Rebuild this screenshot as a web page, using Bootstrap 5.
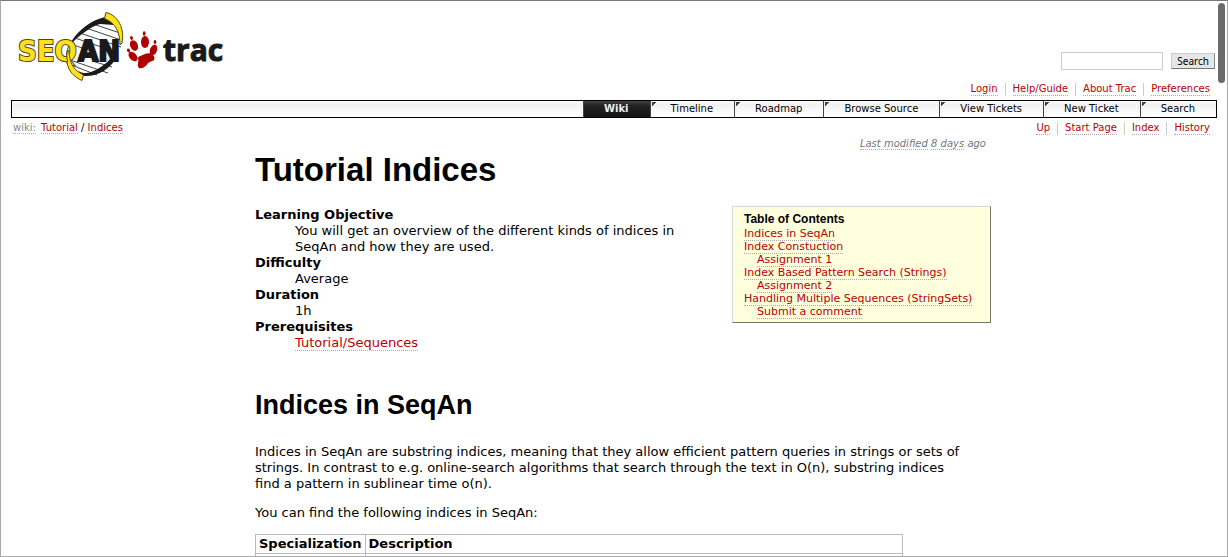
<!DOCTYPE html>
<html lang="en">
<head>
<meta charset="utf-8">
<meta name="viewport" content="width=device-width, initial-scale=1">
<title>Tutorial Indices – SeqAn Trac</title>
<link href="https://cdn.jsdelivr.net/npm/bootstrap@5.3.0/dist/css/bootstrap.min.css" rel="stylesheet">
<style>
  body {
    font: 13px/16px "DejaVu Sans", Verdana, sans-serif;
    color: #000;
    background: #fff;
  }
  .viewport-frame {
    border: 1px solid #aaa;
    border-top-color: #777;
    padding: 0 10px;
  }
  .scroll-thumb {
    top: 2px;
    right: 2px;
    width: 7px;
    height: 80px;
    background: #6b6b6b;
  }
  a {
    color: #b00;
    text-decoration: none;
    border-bottom: 1px dotted #aaa;
  }
  a:hover { color: #555; background: #eee; }
  .site-head { height: 82px; }
  .site-head .logo-link { border: 0; margin: 10px 0 0 6px; }
  .site-head .logo-link:hover { background: none; }
  .search-form { gap: 8px; margin: 0 2px 13px 0; }
  .search-form input {
    width: 102px;
    height: 18px;
    border: 1px solid #ccc;
  }
  .search-form button {
    font: 10px/13px "Noto Sans", sans-serif;
    height: 16px;
    padding: 0 5px;
    color: #000;
    background: #e6e6e6;
    border: 1px solid;
    border-color: #ccc #888 #777 #ccc;
  }
  .link-row { font-size: 10px; line-height: 12px; padding-right: 7px; }
  .link-row li + li { border-left: 1px solid #ccc; margin-left: 7px; padding-left: 7px; }
  .link-row a { display: block; line-height: 12px; }
  .main-tabs {
    border: 1px solid #000;
    font-size: 10px;
    line-height: 16px;
    background: linear-gradient(#fff, #f1f1f1 20%, #fff 90%);
    margin: 4px 0;
  }
  .main-tabs li { border-left: 1px solid #444; }
  .main-tabs a {
    display: block;
    padding: 0 21px 0 20px;
    border: 0;
    color: #000;
    background: linear-gradient(135deg, #444 3px, transparent 3px) no-repeat 1px 1px / 8px 8px;
  }
  .main-tabs .current a {
    color: #eee;
    font-weight: 700;
    background: linear-gradient(#444, #222 30%, #151515);
  }
  .crumbs { font-size: 10px; line-height: 12px; margin-left: 2px; }
  .crumbs .first-crumb { color: #888; margin-right: 2px; }
  .wiki-content { max-width: 754px; padding-left: 18px; }
  .last-change { font-size: 10px; line-height: 12px; color: #777; margin: 3px 5px 0 0; }
  .last-change a { color: inherit; }
  h1, h2 { font-family: "Liberation Sans", Arial, sans-serif; font-weight: 700; }
  h1 { font-size: 33px; line-height: 40px; margin: 0 0 16px; }
  h2 { font-size: 27px; line-height: 32px; margin: 38px 0 23px; }
  .wiki-content dl { padding-top: 1px; }
  .wiki-content dt { font-weight: 700; }
  .wiki-content dd { margin: 0 0 0 40px; }
  .wiki-content p { margin: 0 0 13px; padding-right: 24px; }
  .toc-box {
    background: #ffd;
    border: 1px solid;
    border-color: #d7d7d7 #776 #776 #d7d7d7;
    font-size: 11px;
    line-height: 13px;
    min-width: 259px;
    padding: 5px 11px 4px;
    margin-left: 30px;
  }
  .toc-box h4 { font: 700 12px/15px "Liberation Sans", Arial, sans-serif; margin: 0; }
  .toc-box ol ol { padding-left: 13px; }
  .wiki-table { border-collapse: collapse; width: 648px; max-width: 100%; }
  .wiki-table th, .wiki-table td { border: 1px solid #bbb; padding: 1px 3px; }
  .wiki-table th { font-weight: 700; }
</style>
</head>
<body>
<div class="viewport-frame vh-100 overflow-hidden position-relative">
  <div class="scroll-thumb position-absolute rounded-pill"></div>

  <header class="site-head d-flex justify-content-between">
    <a class="logo-link" href="#" aria-label="SeqAn Trac">
      <svg class="d-block" width="210" height="72" viewBox="17 11 210 72" role="img">
        <path d="M93 24L120 33M86 28L121 40M80 33L121 47M75 38L116 52M71 44L96 53M70 60L108 73M74 66L97 75M92 61L112 67" fill="none" stroke="#444" stroke-width="1"/>
        <path d="M105 17C92 20 79 29 71 42L72 43C80 35 90 27 100 24L114 25C112 21 109 18 105 17Z" fill="#1a1a1a"/>
        <path d="M78 71C82 73 86 74 91 72 99 69 106 64 112 57L118 56C110 69 98 77 83 76Z" fill="#1a1a1a"/>
        <path d="M71 42C68 47 66 52 66.500 58" fill="none" stroke="#333" stroke-width="1"/>
        <path d="M106 12.500C118 15 125 29 122 43L120 45C120 33 116 23 104.500 18.500Z" fill="#ffe11a" stroke="#554a10" stroke-width="1"/>
        <g font-family="'DejaVu Sans Condensed', 'Open Sans', sans-serif" font-weight="700" font-size="29" paint-order="stroke">
          <text x="18" y="61" fill="#ffe11a" stroke="#4d4620" stroke-width="2">SEQ</text>
          <text x="78" y="61" fill="#1a1a1a" stroke="#1a1a1a" stroke-width="2">AN</text>
        </g>
        <path d="M67.500 61C66 55 67 52 68.500 50 70 57 69 60 73.500 67 76 71 80 73 83.500 75L82 80.500C74 77 68 71 67 62Z" fill="#ffe11a" stroke="#554a10" stroke-width="1"/>
        <text x="163" y="61" font-family="'Open Sans', sans-serif" font-weight="700" font-size="30" fill="#1a1a1a" stroke="#1a1a1a" stroke-width="1">trac</text>
        <g fill="#b00000">
          <path d="M137.500 58C140 55 142 56 145 54 149 52 154 54 154.500 58 154.500 62 150 61 148 63 146 67 142 69 139 68 136 65 140 61 137.500 58Z"/>
          <ellipse cx="145" cy="42" rx="4" ry="6"/>
          <ellipse cx="134" cy="45.500" rx="3.800" ry="5.500" transform="rotate(-24 134 45.500)"/>
          <ellipse cx="153.500" cy="50" rx="3.500" ry="5.500" transform="rotate(20 153.500 50)"/>
          <ellipse cx="133" cy="56.500" rx="3.600" ry="5.500" transform="rotate(-40 133 56.500)"/>
          <ellipse cx="144.200" cy="33.500" rx="1.400" ry="2.200"/>
          <ellipse cx="131.500" cy="38" rx="1.400" ry="2" transform="rotate(-25 131.500 38)"/>
          <ellipse cx="155" cy="42" rx="1.400" ry="2"/>
          <ellipse cx="128.500" cy="50.500" rx="1.400" ry="2" transform="rotate(-30 128.500 50.500)"/>
        </g>
      </svg>
    </a>
    <form class="search-form d-flex align-items-center align-self-end" role="search">
      <input type="text" aria-label="Search the site">
      <button type="submit">Search</button>
    </form>
  </header>

  <nav aria-label="Account">
    <ul class="link-row list-unstyled d-flex justify-content-end mb-0">
      <li><a href="#">Login</a></li>
      <li><a href="#">Help/Guide</a></li>
      <li><a href="#">About Trac</a></li>
      <li><a href="#">Preferences</a></li>
    </ul>
  </nav>

  <nav class="main-tabs" aria-label="Main">
    <ul class="list-unstyled d-flex justify-content-end mb-0">
      <li class="current"><a href="#" aria-current="page">Wiki</a></li>
      <li><a href="#">Timeline</a></li>
      <li><a href="#">Roadmap</a></li>
      <li><a href="#">Browse Source</a></li>
      <li><a href="#">View Tickets</a></li>
      <li><a href="#">New Ticket</a></li>
      <li><a href="#">Search</a></li>
    </ul>
  </nav>

  <div class="d-flex justify-content-between">
    <div class="crumbs"><a class="first-crumb" href="#">wiki:</a> <a href="#">Tutorial</a> / <a href="#">Indices</a></div>
    <ul class="link-row list-unstyled d-flex mb-0">
      <li><a href="#">Up</a></li>
      <li><a href="#">Start Page</a></li>
      <li><a href="#">Index</a></li>
      <li><a href="#">History</a></li>
    </ul>
  </div>

  <main class="wiki-content mx-auto">
    <div class="last-change text-end fst-italic"><a href="#">Last modified</a> <a href="#">8 days</a> ago</div>
    <h1>Tutorial Indices</h1>
    <div class="d-flex align-items-start justify-content-between">
      <dl class="mb-0">
        <dt>Learning Objective</dt>
        <dd>You will get an overview of the different kinds of indices in SeqAn and how they are used.</dd>
        <dt>Difficulty</dt>
        <dd>Average</dd>
        <dt>Duration</dt>
        <dd>1h</dd>
        <dt>Prerequisites</dt>
        <dd><a href="#">Tutorial/Sequences</a></dd>
      </dl>
      <aside class="toc-box flex-shrink-0">
        <h4>Table of Contents</h4>
        <ol class="list-unstyled mb-0">
          <li><a href="#">Indices in SeqAn</a></li>
          <li><a href="#">Index Constuction</a>
            <ol class="list-unstyled"><li><a href="#">Assignment 1</a></li></ol>
          </li>
          <li><a href="#">Index Based Pattern Search (Strings)</a>
            <ol class="list-unstyled"><li><a href="#">Assignment 2</a></li></ol>
          </li>
          <li><a href="#">Handling Multiple Sequences (StringSets)</a>
            <ol class="list-unstyled"><li><a href="#">Submit a comment</a></li></ol>
          </li>
        </ol>
      </aside>
    </div>

    <h2>Indices in SeqAn</h2>
    <p>Indices in SeqAn are substring indices, meaning that they allow efficient pattern queries in strings or sets of strings. In contrast to e.g. online-search algorithms that search through the text in O(n), substring indices find a pattern in sublinear time o(n).</p>
    <p>You can find the following indices in SeqAn:</p>
    <table class="wiki-table">
      <thead><tr><th scope="col">Specialization</th><th scope="col" class="w-100">Description</th></tr></thead>
      <tbody><tr><td>&nbsp;</td><td>&nbsp;</td></tr></tbody>
    </table>
  </main>
</div>
<script src="https://cdn.jsdelivr.net/npm/bootstrap@5.3.0/dist/js/bootstrap.bundle.min.js"></script>
</body>
</html>
